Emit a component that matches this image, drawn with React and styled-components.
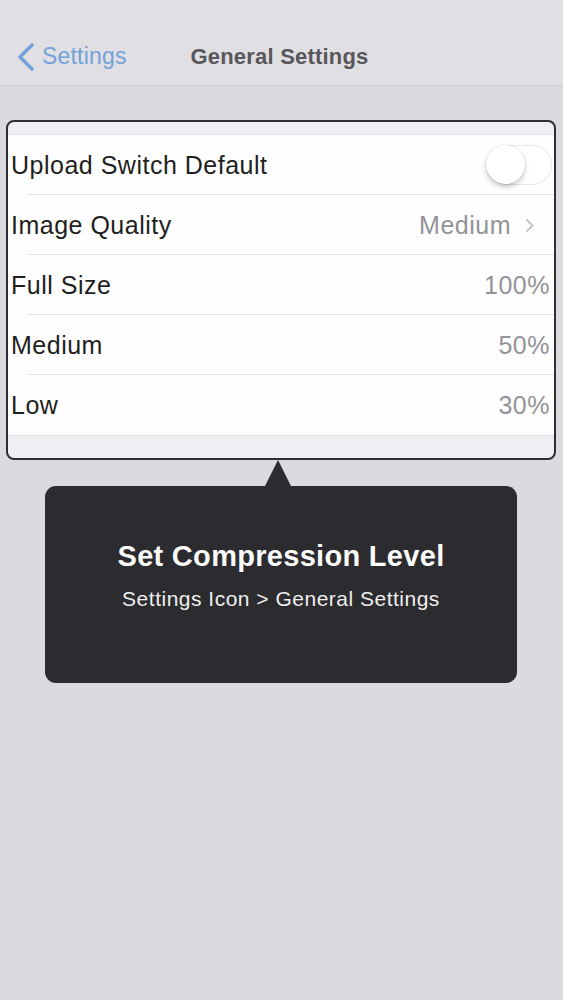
import React from "react";
import styled, { createGlobalStyle } from "styled-components";

const GlobalStyle = createGlobalStyle`
  html, body {
    margin: 0;
    padding: 0;
    background: #dbdade;
    font-family: "Liberation Sans", Arial, sans-serif;
  }
`;

const Screen = styled.div`
  width: 563px;
  min-height: 1000px;
  background: #dbdade;
  display: flex;
  flex-direction: column;
`;

const NavBar = styled.div`
  height: 86px;
  box-sizing: border-box;
  border-bottom: 1px solid #cfced2;
  background: #e0dfe3;
  display: grid;
  grid-template-columns: 1fr auto 1fr;
  align-items: center;
  padding-top: 28px;
`;

const BackButton = styled.div`
  display: flex;
  align-items: center;
  gap: 6px;
  padding-left: 16px;
  color: #72a2d9;
  font-size: 23px;
  letter-spacing: 0.2px;
`;

const NavTitle = styled.div`
  font-size: 22px;
  font-weight: bold;
  color: #58575b;
  margin-left: -4px;
  letter-spacing: 0.2px;
`;

const Highlight = styled.div`
  margin: 34px 7px 0 6px;
  border: 2px solid #2e2d31;
  border-radius: 8px;
  overflow: hidden;
  background: #efeff3;
  padding: 12px 0 22px;
`;

const Table = styled.div`
  background: #fefefe;
  border-top: 1px solid #e3e3e6;
  border-bottom: 1px solid #dcdcdf;
`;

const Row = styled.div`
  height: 60px;
  display: flex;
  align-items: center;
  justify-content: space-between;
  padding: 0 4px 0 3px;
  position: relative;
  &:not(:last-child)::after {
    content: "";
    position: absolute;
    left: 20px;
    right: 0;
    bottom: 0;
    height: 1px;
    background: #e4e4e7;
  }
`;

const Label = styled.span`
  font-size: 25px;
  letter-spacing: 0.5px;
  color: #1f1f21;
`;

const Value = styled.span`
  display: flex;
  align-items: center;
  gap: 14px;
  font-size: 25px;
  letter-spacing: 0.5px;
  color: #939398;
  padding-right: ${(p) => (p.$chevron ? "16px" : "0")};
`;

const Toggle = styled.div`
  width: 66px;
  height: 40px;
  box-sizing: border-box;
  border-radius: 20px;
  border: 1.5px solid #e6e6e9;
  background: #fff;
  position: relative;
  margin-right: -2px;
  &::before {
    content: "";
    position: absolute;
    left: -1px;
    top: -1px;
    width: 39px;
    height: 39px;
    border-radius: 50%;
    background: #fff;
    box-shadow: 0 3px 5px rgba(0, 0, 0, 0.22), 0 0 0 0.5px rgba(0, 0, 0, 0.08);
  }
`;

const Callout = styled.div`
  margin: 0 46px 0 45px;
  display: flex;
  flex-direction: column;
  align-items: center;
`;

const Arrow = styled.div`
  width: 0;
  height: 0;
  border-left: 13px solid transparent;
  border-right: 13px solid transparent;
  border-bottom: 26px solid #2c2b2f;
  margin-left: -6px;
`;

const Bubble = styled.div`
  align-self: stretch;
  height: 197px;
  background: #2c2b2f;
  border-radius: 11px;
  display: flex;
  flex-direction: column;
  align-items: center;
  padding-top: 54px;
  box-sizing: border-box;
  color: #fbfbfb;
`;

const BubbleTitle = styled.div`
  font-size: 29px;
  font-weight: bold;
  letter-spacing: 0.3px;
`;

const BubbleText = styled.div`
  font-size: 21px;
  letter-spacing: 0.5px;
  margin-top: 14px;
  color: #eeeeee;
`;

const BackChevron = () => (
  <svg width="20" height="28" viewBox="0 0 20 28">
    <path d="M16 2 L4 14 L16 26" fill="none" stroke="#72a2d9" strokeWidth="3.5" strokeLinecap="round" strokeLinejoin="round" />
  </svg>
);

const Chevron = () => (
  <svg width="9" height="15" viewBox="0 0 9 15">
    <path d="M1.5 1.5 L7.5 7.5 L1.5 13.5" fill="none" stroke="#c4c4c8" strokeWidth="2" />
  </svg>
);

const rows = [
  { label: "Full Size", value: "100%" },
  { label: "Medium", value: "50%" },
  { label: "Low", value: "30%" },
];

export default function App() {
  return (
    <Screen>
      <GlobalStyle />
      <NavBar>
        <BackButton>
          <BackChevron />
          Settings
        </BackButton>
        <NavTitle>General Settings</NavTitle>
        <div />
      </NavBar>
      <Highlight>
        <Table>
          <Row>
            <Label>Upload Switch Default</Label>
            <Toggle />
          </Row>
          <Row>
            <Label>Image Quality</Label>
            <Value $chevron>
              Medium
              <Chevron />
            </Value>
          </Row>
          {rows.map((r) => (
            <Row key={r.label}>
              <Label>{r.label}</Label>
              <Value>{r.value}</Value>
            </Row>
          ))}
        </Table>
      </Highlight>
      <Callout>
        <Arrow />
        <Bubble>
          <BubbleTitle>Set Compression Level</BubbleTitle>
          <BubbleText>Settings Icon &gt; General Settings</BubbleText>
        </Bubble>
      </Callout>
    </Screen>
  );
}
